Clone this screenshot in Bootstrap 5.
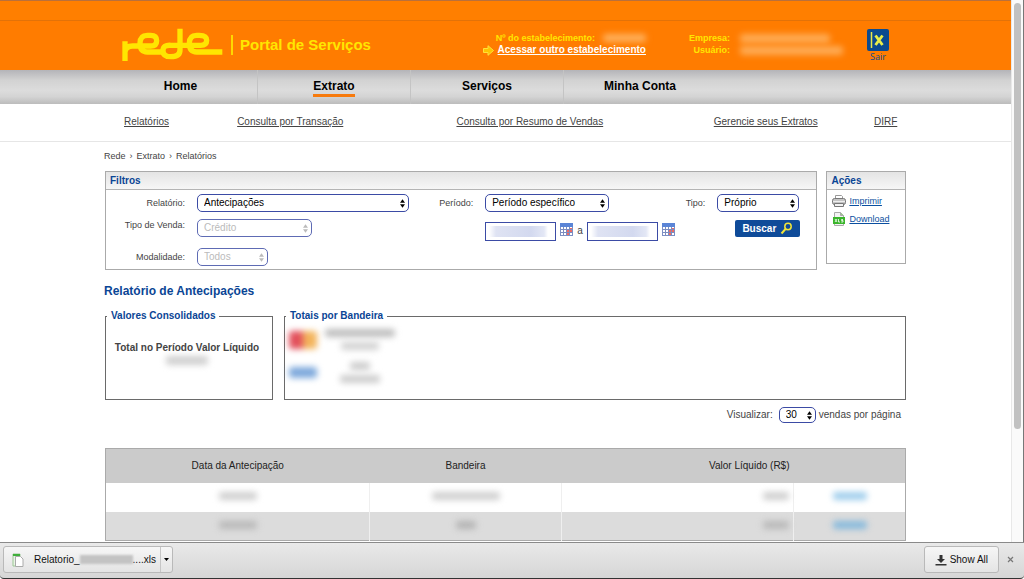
<!DOCTYPE html>
<html lang="pt-BR">
<head>
<meta charset="utf-8">
<meta name="viewport" content="width=device-width, initial-scale=1">
<title>Rede | Portal de Serviços</title>
<link href="https://cdn.jsdelivr.net/npm/bootstrap@5.3.0/dist/css/bootstrap.min.css" rel="stylesheet">
<style>
  body { font: 10px/12px "Liberation Sans", Arial, sans-serif; color: #444; background: #fff; }
  .blue { color: #0a4595; }
  .wrap { max-width: 803px; width: 100%; margin: 0 auto; }

  /* header */
  .top-strip { height: 21px; background: #ff7f00; border-top: 1px solid #b9703c; border-bottom: 1px solid #e37208; }
  .brand-bar { height: 49px; background: #ff7c00; color: #ffe600; }
  .brand-bar .wrap { padding: 7px 18px 0; }
  .portal-name { font-size: 15px; line-height: 20px; font-weight: 700; border-left: 2px solid #ffd800; padding-left: 7px; margin: 7px 0 0 8px; }
  .account { font-size: 9px; font-weight: 700; padding-top: 4px; }
  .account a { font-size: 10px; color: #fff; }
  .account-labels { margin-left: 43px; }
  .account-values { margin-left: 10px; width: 105px; gap: 3px; padding-top: 6px; }
  .redact { display: inline-block; filter: blur(3px); border-radius: 3px; }
  .exit { color: #0b4a8f; font: 9px/12px "Open Sans", sans-serif; text-decoration: none; margin-left: 22px; padding-top: 1px; }

  /* navigation */
  .main-nav { height: 34px; background: linear-gradient(#b4b4b8, #d2d2d2 30%, #dcdcdc 60%, #d4d4d4 78%, #bcbcbc); }
  .main-nav li { width: 153px; height: 34px; padding-top: 8px; text-align: center; }
  .main-nav li + li { border-left: 1px solid #c4c4c4; }
  .main-nav a { display: inline-block; font-size: 12px; line-height: 16px; font-weight: 700; color: #000; text-decoration: none; }
  .main-nav a.active { border-bottom: 3px solid #f77a0c; }
  .sub-nav { border-bottom: 1px solid #e6e6e6; }
  .sub-nav ul { display: grid; grid-template-columns: 113fr 219fr 257fr 160fr 33fr; padding: 12px 0 13px 20px; }
  .sub-nav a { color: #444; }
  .crumbs { font-size: 9px; gap: 4px; margin: 8px 0 9px; }

  /* boxes */
  .panel { border: 1px solid #aaa; }
  .panel h2 { font-size: 10px; line-height: 17px; font-weight: 700; margin: 0; padding: 0 4px; background: linear-gradient(#e4e4e4, #f6f6f6); border-bottom: 1px solid #b4b4b4; }
  .actions { width: 80px; min-height: 93px; }
  .actions a { font-size: 9px; color: #0a4fa0; }
  .filter-grid { display: grid; column-gap: 12px; row-gap: 7px; padding: 4px 0 3px; grid-template-rows: 18px 22px 18px;
    grid-template-columns: 79px minmax(0,222fr) 42px minmax(0,188fr) 20px minmax(0,99fr); }
  .filter-grid label { font-size: 9px; line-height: 18px; text-align: right; white-space: nowrap; }
  .filter-grid .label-high { line-height: 12px; }
  .form-select { font-size: 10px; line-height: 12px; height: 18px; min-height: 0; padding: 0 12px 0 6px; color: #000; border: 1px solid #3b4ba5; border-radius: 5px;
    background: #fff url("data:image/svg+xml,%3Csvg xmlns='http://www.w3.org/2000/svg' viewBox='0 0 6 10'%3E%3Cpath d='M3 0l3 4H0zM3 10l3-4H0z'/%3E%3C/svg%3E") no-repeat right 3px center / 5px 9px; }
  .form-select:disabled { color: #bbb; background-color: #fff; border-color: #5e6bb4;
    background-image: url("data:image/svg+xml,%3Csvg xmlns='http://www.w3.org/2000/svg' viewBox='0 0 6 10'%3E%3Cpath fill='%23bbb' d='M3 0l3 4H0zM3 10l3-4H0z'/%3E%3C/svg%3E"); }
  .w-long { width: 212px; } .w-credit { width: 115px; } .w-all { width: 71px; }
  .w-period { width: 124px; } .w-type { width: 82px; } .w-count { width: 37px; height: 16px; }
  .date-row { gap: 4px; }
  .date-box { width: 71px; height: 19px; min-height: 0; padding: 0 4px; font-size: 9px; border: 1px solid #3b4ba5; border-radius: 0;
    background: linear-gradient(90deg, #fff 3px, #dfe3f3 10px, #d3d9ef 45px, #e3e7f5 58px, #fff 62px) center / 100% 11px no-repeat; }
  .icon-btn { border: 0; background: none; padding: 0; line-height: 0; }
  .date-row .icon-btn { align-self: flex-start; }
  .search-btn { width: 65px; height: 17px; margin: 1px 0 0 18px; padding: 0; font-size: 10px; line-height: 12px; font-weight: 700; color: #fff; background: #0f4b99; border: 0; border-radius: 2px; }

  .report-title { font-size: 12px; line-height: 16px; font-weight: 700; margin: 13px 0 11px; }
  .totals { border: 1px solid #6a6a6a; height: 90px; min-width: 0; }
  .totals legend { float: none; width: auto; font-size: 10px; line-height: 12px; font-weight: 700; margin: 0 0 0 1px; padding: 0 4px; }
  .period-total { width: 168px; }
  .flag { width: 28px; height: 18px; }

  /* result table */
  .results { --bs-table-bg: transparent; margin: 0; border: 1px solid #aaa; table-layout: fixed; color: #222; }
  .results th, .results td { padding: 0 4px; border: 0; text-align: center; vertical-align: middle; }
  .results th { height: 34px; background: #cbcbcb; font-weight: 400; color: #222; }
  .results td { height: 29px; }
  .results td + td { border-left: 1px solid #efefef; }
  .results tbody tr:nth-child(even) { background: #dcdcdc; }

  /* browser frame */
  .scroll-track { width: 13px; border-left: 1px solid #e8e8e8; border-right: 1px solid #777; background: #fafafa; padding: 3px 2px 0; }
  .scroll-thumb { height: 79%; border-radius: 4px; background: #c1c1c1; }
  .downloads { height: 37px; background: linear-gradient(#e9e9e9, #d6d6d6); border-top: 1px solid #8a8a8a; border-bottom: 1px solid #333; border-radius: 0 0 4px 4px; color: #111; padding: 0 4px 2px 3px; }
  .chip { height: 27px; font-size: 10px; line-height: 12px; color: #111; background: linear-gradient(#f6f6f6, #e4e4e4); border: 1px solid #b9b9b9; border-radius: 3px; padding: 0; }
  .chip-menu { border-left: 1px solid #c6c6c6; width: 12px; height: 25px; }
</style>
</head>
<body class="vh-100 d-flex flex-column overflow-hidden">

<div class="d-flex flex-fill overflow-hidden">
  <div class="flex-fill overflow-hidden">
    <header>
      <div class="top-strip"></div>
      <div class="brand-bar">
        <div class="wrap d-flex align-items-start">
          <svg width="101" height="34" viewBox="18 12 303 102" fill="none" stroke="#ffe600" stroke-width="16" role="img" aria-label="rede">
            <path d="M27 52V111M27 84Q29 66 50 66H104Q122 66 122 50Q122 34 104 34H94Q72 34 72 58Q72 84 94 84H142"/>
            <path d="M192 14V78Q192 98 165 98Q141 98 141 80Q141 62 165 64H254Q272 64 272 49Q272 34 250 34H242Q220 34 220 58Q220 84 242 84H319"/>
          </svg>
          <div class="portal-name">Portal de Serviços</div>
          <div class="account ms-auto">
            <div class="d-flex justify-content-end align-items-center">Nº do estabelecimento:<span class="redact ms-2" style="width:43px;height:8px;background:#ffb25e"></span></div>
            <div class="d-flex align-items-center gap-1">
              <svg width="11" height="11" viewBox="0 0 11 11"><path d="M.5 3.500H5V.7L10.500 5.500 5 10.300V7.500H.5z" fill="#ffc400" stroke="#ffe03a"/></svg>
              <a href="#">Acessar outro estabelecimento</a>
            </div>
          </div>
          <div class="account account-labels text-end">
            <div>Empresa:</div>
            <div>Usuário:</div>
          </div>
          <div class="account account-values d-flex flex-column">
            <span class="redact" style="width:90px;height:9px;background:#ffac55"></span>
            <span class="redact" style="width:103px;height:9px;background:#ffac55"></span>
          </div>
          <a class="exit d-flex flex-column align-items-center" href="#">
            <svg width="22" height="22" viewBox="0 0 22 22"><rect width="22" height="22" rx="2" fill="#0b4a8f"/><path d="M4.500 3V19" stroke="#e9e94a" stroke-width="1.500"/><path d="M8.500 6.500l7 9.500M15.500 6.500l-7 9.500" stroke="#e9ee4a" stroke-width="2.800"/></svg>
            Sair
          </a>
        </div>
      </div>
      <nav class="main-nav" aria-label="Principal">
        <ul class="wrap list-unstyled d-flex">
          <li><a href="#">Home</a></li>
          <li><a class="active" href="#">Extrato</a></li>
          <li><a href="#">Serviços</a></li>
          <li><a href="#">Minha Conta</a></li>
        </ul>
      </nav>
      <nav class="sub-nav" aria-label="Extrato">
        <ul class="wrap list-unstyled">
          <li><a href="#">Relatórios</a></li>
          <li><a href="#">Consulta por Transação</a></li>
          <li><a href="#">Consulta por Resumo de Vendas</a></li>
          <li><a href="#">Gerencie seus Extratos</a></li>
          <li><a href="#">DIRF</a></li>
        </ul>
      </nav>
    </header>

    <main class="wrap">
      <div class="crumbs d-flex"><span>Rede</span><span>›</span><span>Extrato</span><span>›</span><span>Relatórios</span></div>

      <div class="d-flex align-items-start" style="gap:9px;padding:0 1px">
        <form class="panel flex-fill">
          <h2 class="blue">Filtros</h2>
          <div class="filter-grid">
            <label for="relatorio">Relatório:</label>
            <div><select id="relatorio" class="form-select w-long"><option>Antecipações</option></select></div>
            <label for="periodo">Período:</label>
            <div><select id="periodo" class="form-select w-period"><option>Período específico</option></select></div>
            <label for="tipo">Tipo:</label>
            <div><select id="tipo" class="form-select w-type"><option>Próprio</option></select></div>

            <label class="label-high" for="venda">Tipo de Venda:</label>
            <div><select id="venda" class="form-select w-credit" disabled><option>Crédito</option></select></div>
            <span></span>
            <div class="date-row d-flex align-items-end">
              <input class="form-control date-box" type="text" aria-label="Data inicial">
              <button type="button" class="icon-btn pt-1" aria-label="Calendário inicial"><svg width="13" height="13" viewBox="0 0 13 13"><rect x=".5" y=".5" width="12" height="12" fill="#fff" stroke="#7d8fc4"/><path d="M0 0h13v4H0z" fill="#5b85d6"/><path d="M3.500 4v8M6.500 4v8M9.500 4v8M1 6.500h11M1 9.500h11" stroke="#7b8cc0"/><path d="M7 7h2v2H7zM10 5h2v1h-2zM10 7h2v2h-2zM7 10h2v2H7z" fill="#f06a62"/></svg></button>
              <span class="pb-1">a</span>
              <input class="form-control date-box" type="text" aria-label="Data final">
              <button type="button" class="icon-btn pt-1" aria-label="Calendário final"><svg width="13" height="13" viewBox="0 0 13 13"><rect x=".5" y=".5" width="12" height="12" fill="#fff" stroke="#7d8fc4"/><path d="M0 0h13v4H0z" fill="#5b85d6"/><path d="M3.500 4v8M6.500 4v8M9.500 4v8M1 6.500h11M1 9.500h11" stroke="#7b8cc0"/><path d="M7 7h2v2H7zM10 5h2v1h-2zM10 7h2v2h-2zM7 10h2v2H7z" fill="#f06a62"/></svg></button>
            </div>
            <span></span>
            <div><button type="button" class="search-btn d-flex align-items-center justify-content-center gap-1">Buscar
              <svg width="13" height="13" viewBox="0 0 13 13" fill="none"><circle cx="8" cy="4.500" r="3.200" stroke="#f2e63a" stroke-width="1.500"/><path d="M5.500 7L1.500 11.500" stroke="#f2e63a" stroke-width="2"/></svg></button></div>

            <label for="modalidade">Modalidade:</label>
            <div><select id="modalidade" class="form-select w-all" disabled><option>Todos</option></select></div>
          </div>
        </form>

        <section class="panel actions">
          <h2 class="blue">Ações</h2>
          <div class="d-flex flex-column gap-1 pt-1" style="padding-left:5px">
            <div class="d-flex align-items-center" style="gap:3px">
              <svg width="14" height="14" viewBox="0 0 14 14"><path d="M3.500 5V1.500h6l1 1V5" fill="#fff" stroke="#999"/><rect x=".5" y="4.500" width="13" height="6" rx="2" fill="#c4c4c4" stroke="#777"/><path d="M1 7.500h12" stroke="#eee"/><path d="M2.500 9.500h9v3h-9z" fill="#f2f2f2" stroke="#777"/></svg>
              <a href="#">Imprimir</a>
            </div>
            <div class="d-flex align-items-center" style="gap:3px">
              <svg width="14" height="14" viewBox="0 0 14 14"><path d="M2.500.500h6l3 3v10h-9z" fill="#f4f4f4" stroke="#aaa"/><path d="M8.500.500v3h3" fill="#9bd08a" stroke="#aaa"/><rect x="1" y="5" width="12" height="7" fill="#3ab52c"/><path d="M3 7l2 3M5 7l-2 3M6.500 7v3h1.500M11 7.500H9.500v1H11v1.500H9.200" fill="none" stroke="#fff" stroke-width=".8"/></svg>
              <a href="#">Download</a>
            </div>
          </div>
        </section>
      </div>

      <h1 class="report-title blue">Relatório de Antecipações</h1>

      <div class="d-flex" style="gap:11px;padding:0 1px">
        <fieldset class="totals period-total flex-shrink-0">
          <legend class="blue">Valores Consolidados</legend>
          <div class="text-center" style="padding:20px 4px 0 0">
            <div class="fw-bold">Total no Período Valor Líquido</div>
            <span class="redact" style="width:42px;height:9px;margin-top:2px;background:#d0d0d0"></span>
          </div>
        </fieldset>
        <fieldset class="totals flex-fill">
          <legend class="blue">Totais por Bandeira</legend>
          <div class="d-flex align-items-center gap-2 ps-1" style="padding-top:7px">
            <span class="redact flag" style="background:linear-gradient(90deg,#e2505c 45%,#f3b45c 55%)"></span>
            <div class="d-flex flex-column align-items-center">
              <span class="redact" style="width:70px;height:8px;background:#bdbdbd"></span>
              <span class="redact" style="width:38px;height:8px;margin-top:5px;background:#d2d2d2"></span>
            </div>
          </div>
          <div class="d-flex align-items-center gap-2 ps-1" style="padding-top:12px">
            <span class="redact flag" style="height:11px;background:#7ea9dc"></span>
            <div class="d-flex flex-column align-items-center" style="width:70px">
              <span class="redact" style="width:20px;height:8px;background:#ccc"></span>
              <span class="redact" style="width:40px;height:8px;margin-top:5px;background:#cdcdcd"></span>
            </div>
          </div>
        </fieldset>
      </div>

      <div class="d-flex justify-content-end align-items-center" style="margin:7px 6px 25px 0">
        <label for="por-pagina">Visualizar:</label>
        <select id="por-pagina" class="form-select w-count" style="margin:0 3px 0 6px"><option>30</option></select>
        <span>vendas por página</span>
      </div>

      <div style="padding:0 1px">
        <table class="table results">
          <colgroup><col style="width:33%"><col style="width:24%"><col style="width:29%"><col style="width:14%"></colgroup>
          <thead><tr><th scope="col">Data da Antecipação</th><th scope="col">Bandeira</th><th scope="col" class="text-end">Valor Líquido (R$)</th><th></th></tr></thead>
          <tbody>
            <tr>
              <td><span class="redact" style="width:38px;height:8px;background:#cfcfcf"></span></td>
              <td><span class="redact" style="width:68px;height:8px;background:#cfcfcf"></span></td>
              <td class="text-end"><span class="redact" style="width:26px;height:8px;background:#cfcfcf"></span></td>
              <td><span class="redact" style="width:34px;height:8px;background:#9ecdec"></span></td>
            </tr>
            <tr>
              <td><span class="redact" style="width:38px;height:8px;background:#b9b9b9"></span></td>
              <td><span class="redact" style="width:20px;height:8px;background:#b4b4b4"></span></td>
              <td class="text-end"><span class="redact" style="width:26px;height:8px;background:#b9b9b9"></span></td>
              <td><span class="redact" style="width:34px;height:8px;background:#86b9dc"></span></td>
            </tr>
          </tbody>
        </table>
      </div>
    </main>
  </div>
  <div class="scroll-track flex-shrink-0"><div class="scroll-thumb"></div></div>
</div>

<footer class="downloads d-flex align-items-center flex-shrink-0">
  <button type="button" class="chip d-flex align-items-center">
    <svg style="margin:0 10px 0 8px" width="12" height="14" viewBox="0 0 12 14"><path d="M1 1h7v3H4v9H1z" fill="#e8f5e4" stroke="#9cc795"/><path d="M1 1h7v2H1z" fill="#3faf3a"/><path d="M3.500 3.500h5l2.500 2.500v7.500H3.500z" fill="#fff" stroke="#aaa"/></svg>
    Relatorio_<span style="width:53px;height:9px;background:#c3c3c3;filter:blur(1px)"></span>....xls
    <span class="chip-menu d-flex align-items-center justify-content-center ms-1"><svg width="5" height="3" viewBox="0 0 5 3"><path d="M0 0h5L2.500 3z"/></svg></span>
  </button>
  <button type="button" class="chip d-flex align-items-center ms-auto" style="padding:0 10px">
    <svg width="12" height="12" viewBox="0 0 12 12" fill="#333" style="margin-right:3px"><path d="M4.500 1h3v4H10L6 9 2 5h2.500zM.500 10h11v1.500H.500z"/></svg>
    Show All
  </button>
  <button type="button" class="icon-btn" style="margin:0 6px 0 8px" aria-label="Fechar"><svg width="7" height="7" viewBox="0 0 7 7"><path d="M1 1l5 5M6 1L1 6" stroke="#777" stroke-width="1.200"/></svg></button>
</footer>

<script src="https://cdn.jsdelivr.net/npm/bootstrap@5.3.0/dist/js/bootstrap.bundle.min.js"></script>
</body>
</html>
